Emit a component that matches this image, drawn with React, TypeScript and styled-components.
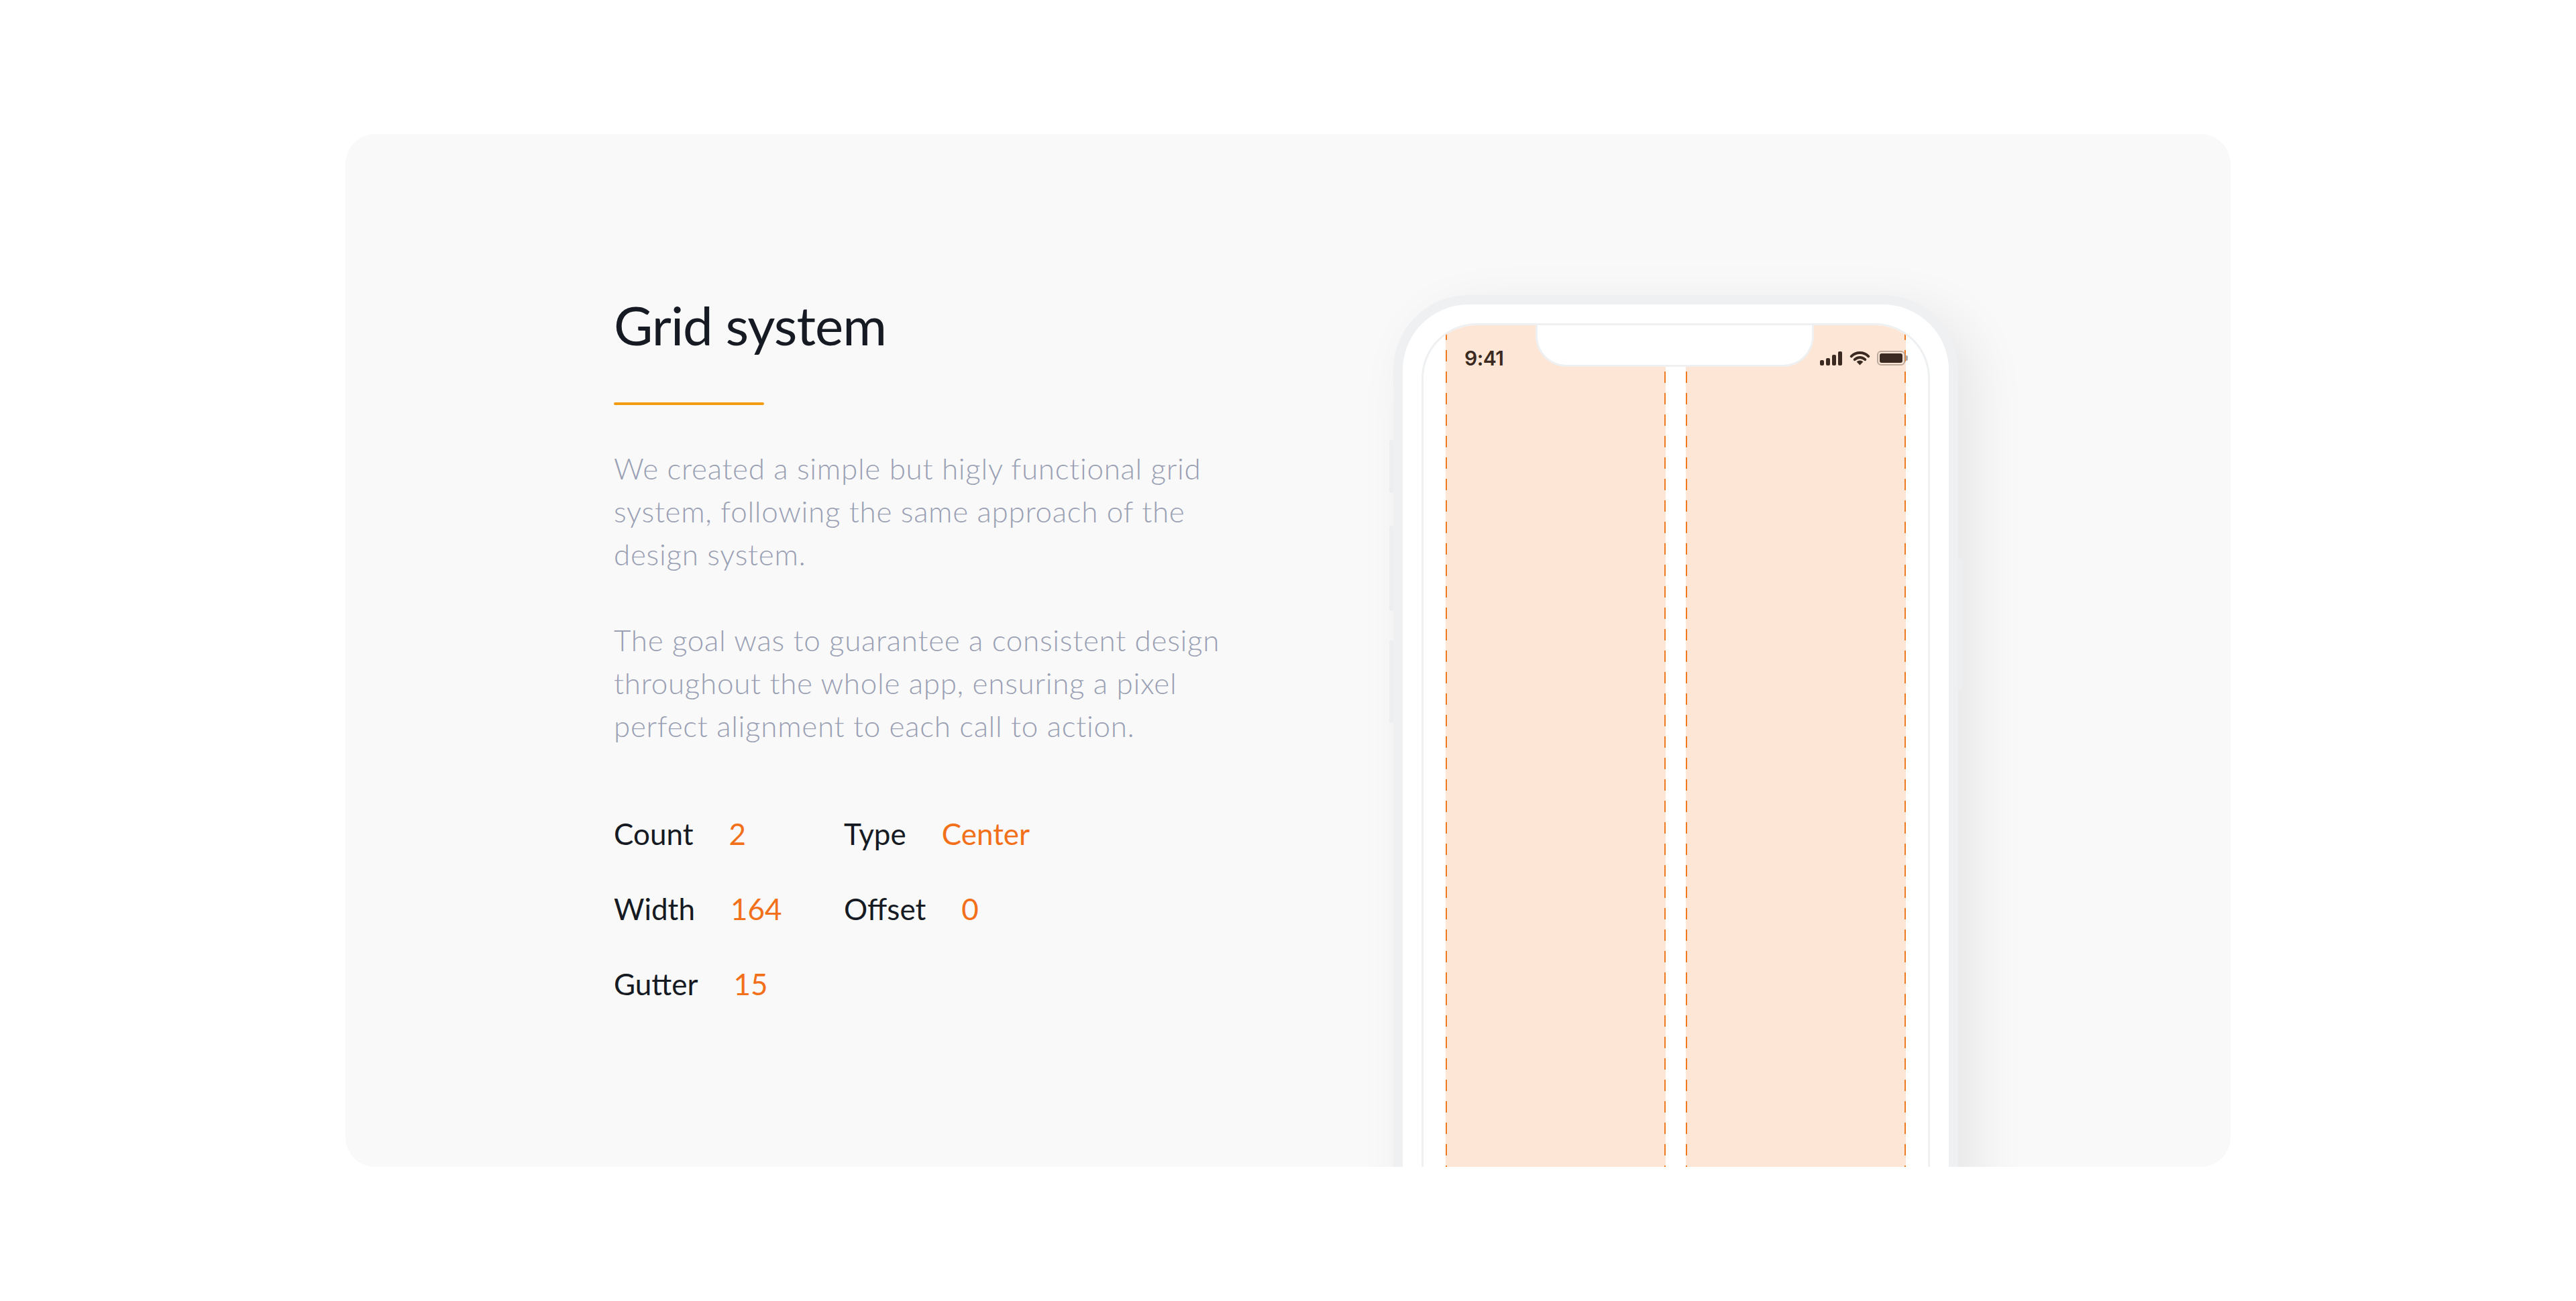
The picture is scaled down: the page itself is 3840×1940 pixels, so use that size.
import React from "react";
import styled, { createGlobalStyle } from "styled-components";

const GlobalStyle = createGlobalStyle`
  html, body {
    margin: 0;
    padding: 0;
    background: #ffffff;
  }
  body {
    font-family: Lato, "Open Sans", sans-serif;
  }
`;

const Page = styled.div`
  padding-top: 200px;
  min-height: 1940px;
  box-sizing: border-box;
`;

const Card = styled.section`
  width: 2810px;
  height: 1540px;
  margin: 0 auto;
  box-sizing: border-box;
  padding: 236px 406px 0 400px;
  background: #f9f9f9;
  border-radius: 44px;
  overflow: hidden;
  display: flex;
  justify-content: space-between;
  align-items: flex-start;
`;

const TextColumn = styled.div`
  width: 1000px;
`;

const Title = styled.h2`
  margin: 0;
  font-size: 80px;
  line-height: 96px;
  font-weight: 400;
  letter-spacing: -1px;
  color: #161a23;
`;

const Accent = styled.div`
  width: 224px;
  height: 4px;
  border-radius: 2px;
  background: #f39c12;
  margin-top: 68px;
`;

const Paragraph = styled.p<{ $first?: boolean }>`
  margin: ${({ $first }) => ($first ? "62px" : "64px")} 0 0;
  font-size: 44px;
  line-height: 64px;
  font-weight: 300;
  letter-spacing: 0.7px;
  color: #99a0b4;
`;

const Specs = styled.div`
  margin-top: 97px;
  display: grid;
  grid-template-columns: 343px 343px;
  row-gap: 48px;
  font-size: 44px;
  line-height: 64px;
`;

const SpecItem = styled.div`
  display: flex;
`;

const SpecLabel = styled.span`
  color: #161a23;
`;

const SpecValue = styled.span`
  color: #f2701a;
  margin-left: 53px;
`;

const Phone = styled.div`
  position: relative;
  flex-shrink: 0;
  margin-top: 4px;
  width: 842px;
  height: 1624px;
  box-sizing: border-box;
  border: 14px solid #eef0f2;
  border-radius: 112px;
  background: #ffffff;
  padding: 28px;
  box-shadow: 26px 22px 80px rgba(0, 0, 0, 0.08);
`;

const SideButton = styled.div<{ $side: "left" | "right"; $top: number; $h: number }>`
  position: absolute;
  ${({ $side }) => ($side === "left" ? "left: -20px;" : "right: -20px;")}
  top: ${({ $top }) => $top}px;
  height: ${({ $h }) => $h}px;
  width: 6px;
  border-radius: 3px;
  background: #eceef0;
`;

const Screen = styled.div`
  position: relative;
  height: 100%;
  box-sizing: border-box;
  border: 3px solid #eef0f2;
  border-radius: 82px;
  background: #ffffff;
  overflow: hidden;
  display: grid;
  grid-template-columns: 328px 328px;
  column-gap: 30px;
  justify-content: center;
`;

const Column = styled.div`
  position: relative;
  background: #fde6d5;

  &::before,
  &::after {
    content: "";
    position: absolute;
    top: 0;
    bottom: 0;
    width: 2px;
    background-image: linear-gradient(to bottom, #ee7a22 0 17px, transparent 17px);
    background-size: 2px 32px;
    background-position: 0 5px;
    background-repeat: repeat-y;
  }
  &::before {
    left: 0;
  }
  &::after {
    right: 0;
  }
`;

const Notch = styled.div`
  position: absolute;
  top: -3px;
  left: 167px;
  width: 415px;
  height: 65px;
  box-sizing: border-box;
  background: #ffffff;
  border: 3px solid #eef0f2;
  border-top: none;
  border-radius: 0 0 46px 46px;
  z-index: 2;
`;

const StatusBar = styled.div`
  position: absolute;
  top: 24px;
  left: 61px;
  right: 30px;
  height: 50px;
  display: flex;
  align-items: center;
  justify-content: space-between;
  z-index: 3;
`;

const Time = styled.span`
  font-family: Inter, "Liberation Sans", sans-serif;
  font-weight: 600;
  font-size: 30px;
  letter-spacing: -0.5px;
  color: #3b2a22;
`;

const StatusIcons = styled.div`
  display: flex;
  align-items: center;
  gap: 10px;
`;

const Battery = styled.div`
  display: flex;
  align-items: center;
  gap: 1px;
`;

const BatteryBody = styled.div`
  width: 42px;
  height: 22px;
  box-sizing: border-box;
  border: 2px solid #bba99c;
  border-radius: 6px;
  padding: 2px;

  &::before {
    content: "";
    display: block;
    width: 100%;
    height: 100%;
    border-radius: 3px;
    background: #3b2a22;
  }
`;

const BatteryCap = styled.div`
  width: 3px;
  height: 8px;
  border-radius: 0 2px 2px 0;
  background: #a9a9ab;
`;

const SignalIcon = () => (
  <svg width="34" height="21" viewBox="0 0 34 21">
    <rect x="0" y="13" width="6" height="8" rx="2" fill="#3b2a22" />
    <rect x="9" y="10" width="6" height="11" rx="2" fill="#3b2a22" />
    <rect x="18" y="5" width="6" height="16" rx="2" fill="#3b2a22" />
    <rect x="27" y="0" width="6" height="21" rx="2" fill="#3b2a22" />
  </svg>
);

const WifiIcon = () => (
  <svg width="31" height="22" viewBox="0 0 31 22">
    <path
      d="M2.8 8.3 A18 18 0 0 1 28.2 8.3"
      fill="none"
      stroke="#3b2a22"
      strokeWidth="4"
      strokeLinecap="round"
    />
    <path
      d="M7.7 13.2 A11 11 0 0 1 23.3 13.2"
      fill="none"
      stroke="#3b2a22"
      strokeWidth="4"
      strokeLinecap="round"
    />
    <path d="M15.5 21.5 L10.6 16.6 A7 7 0 0 1 20.4 16.6 Z" fill="#3b2a22" />
  </svg>
);

const specs = [
  { label: "Count", value: "2" },
  { label: "Type", value: "Center" },
  { label: "Width", value: "164" },
  { label: "Offset", value: "0" },
  { label: "Gutter", value: "15" },
];

export default function App() {
  return (
    <Page>
      <GlobalStyle />
      <Card>
        <TextColumn>
          <Title>Grid system</Title>
          <Accent />
          <Paragraph $first>
            We created a simple but higly functional grid
            <br />
            system, following the same approach of the
            <br />
            design system.
          </Paragraph>
          <Paragraph>
            The goal was to guarantee a consistent design
            <br />
            throughout the whole app, ensuring a pixel
            <br />
            perfect alignment to each call to action.
          </Paragraph>
          <Specs>
            {specs.map((s) => (
              <SpecItem key={s.label}>
                <SpecLabel>{s.label}</SpecLabel>
                <SpecValue>{s.value}</SpecValue>
              </SpecItem>
            ))}
          </Specs>
        </TextColumn>

        <Phone>
          <SideButton $side="left" $top={202} $h={79} />
          <SideButton $side="left" $top={330} $h={127} />
          <SideButton $side="left" $top={501} $h={123} />
          <SideButton $side="right" $top={379} $h={196} />
          <Screen>
            <Column />
            <Column />
            <Notch />
            <StatusBar>
              <Time>9:41</Time>
              <StatusIcons>
                <SignalIcon />
                <WifiIcon />
                <Battery>
                  <BatteryBody />
                  <BatteryCap />
                </Battery>
              </StatusIcons>
            </StatusBar>
          </Screen>
        </Phone>
      </Card>
    </Page>
  );
}
